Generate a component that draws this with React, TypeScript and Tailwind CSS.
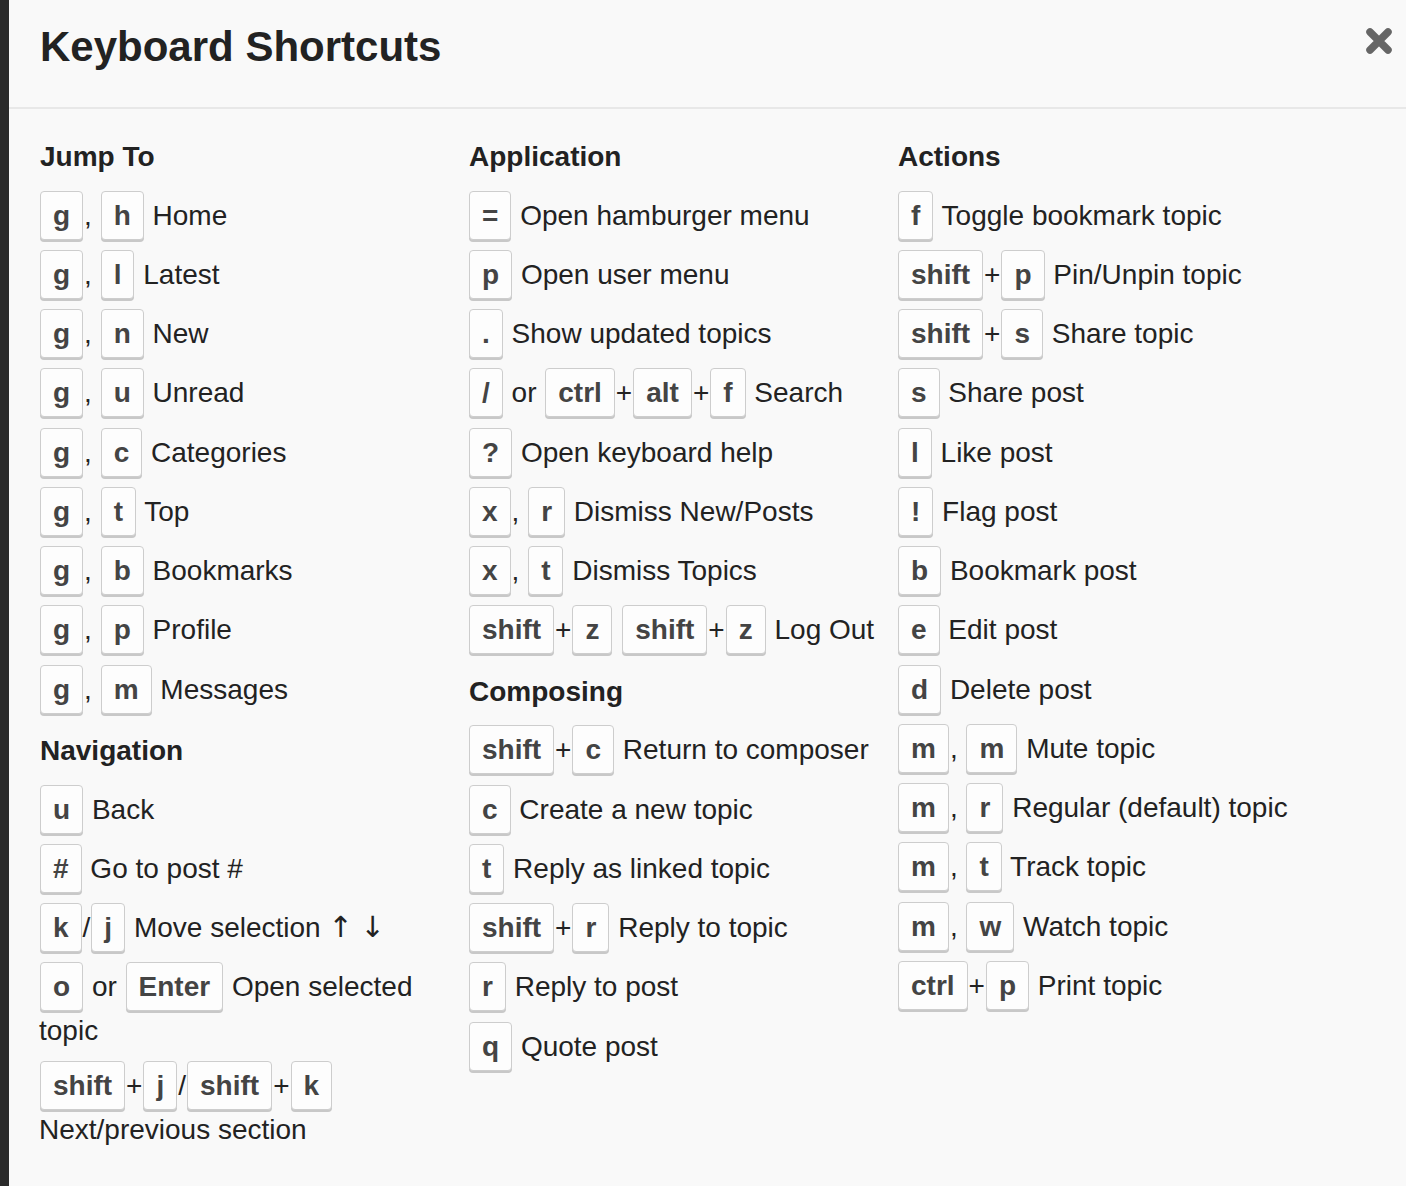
import React from "react";

type Part = string | { k: string } | { a: string };

const K = ({ c }: { c: string }) => (
  <kbd className="mx-px inline-block align-baseline rounded-[4px] border border-[#cdcdcd] bg-[#fdfdfd] px-[12px] py-[6px] font-['Liberation_Sans',Arial,sans-serif] text-[28px] font-bold leading-[35px] text-[#444] shadow-[0_2px_0_#c8c8c8]">
    {c}
  </kbd>
);

const k = (c: string) => ({ k: c });

const Row = ({ parts }: { parts: Part[] }) => (
  <div className="-ml-px mb-[10.25px] leading-[39px]">
    {parts.map((p, i) =>
      typeof p === "string" ? (
        <React.Fragment key={i}>{p}</React.Fragment>
      ) : "k" in p ? (
        <K key={i} c={p.k} />
      ) : (
        <span key={i} className="font-['DejaVu_Sans',sans-serif] text-[29px]">
          {p.a}
        </span>
      )
    )}
  </div>
);

const H = ({ children, first }: { children: React.ReactNode; first?: boolean }) => (
  <h4 className={`${first ? "" : "mt-[19.5px]"} mb-[16.5px] text-[28px] font-bold leading-[35px] text-[#222]`}>
    {children}
  </h4>
);

const jump: Part[][] = [
  [k("g"), ", ", k("h"), " Home"],
  [k("g"), ", ", k("l"), " Latest"],
  [k("g"), ", ", k("n"), " New"],
  [k("g"), ", ", k("u"), " Unread"],
  [k("g"), ", ", k("c"), " Categories"],
  [k("g"), ", ", k("t"), " Top"],
  [k("g"), ", ", k("b"), " Bookmarks"],
  [k("g"), ", ", k("p"), " Profile"],
  [k("g"), ", ", k("m"), " Messages"],
];

const nav: Part[][] = [
  [k("u"), " Back"],
  [k("#"), " Go to post #"],
  [k("k"), "/", k("j"), " Move selection ", { a: "\u2191" }, " ", { a: "\u2193" }],
  [k("o"), " or ", k("Enter"), " Open selected topic"],
  [k("shift"), "+", k("j"), "/", k("shift"), "+", k("k"), " Next/previous section"],
];

const app: Part[][] = [
  [k("="), " Open hamburger menu"],
  [k("p"), " Open user menu"],
  [k("."), " Show updated topics"],
  [k("/"), " or ", k("ctrl"), "+", k("alt"), "+", k("f"), " Search"],
  [k("?"), " Open keyboard help"],
  [k("x"), ", ", k("r"), " Dismiss New/Posts"],
  [k("x"), ", ", k("t"), " Dismiss Topics"],
  [k("shift"), "+", k("z"), " ", k("shift"), "+", k("z"), " Log Out"],
];

const composing: Part[][] = [
  [k("shift"), "+", k("c"), " Return to composer"],
  [k("c"), " Create a new topic"],
  [k("t"), " Reply as linked topic"],
  [k("shift"), "+", k("r"), " Reply to topic"],
  [k("r"), " Reply to post"],
  [k("q"), " Quote post"],
];

const actions: Part[][] = [
  [k("f"), " Toggle bookmark topic"],
  [k("shift"), "+", k("p"), " Pin/Unpin topic"],
  [k("shift"), "+", k("s"), " Share topic"],
  [k("s"), " Share post"],
  [k("l"), " Like post"],
  [k("!"), " Flag post"],
  [k("b"), " Bookmark post"],
  [k("e"), " Edit post"],
  [k("d"), " Delete post"],
  [k("m"), ", ", k("m"), " Mute topic"],
  [k("m"), ", ", k("r"), " Regular (default) topic"],
  [k("m"), ", ", k("t"), " Track topic"],
  [k("m"), ", ", k("w"), " Watch topic"],
  [k("ctrl"), "+", k("p"), " Print topic"],
];

export default function App() {
  return (
    <div className="flex min-h-[1186px] w-full font-['Liberation_Sans',Arial,sans-serif] text-[#222]">
      <div className="w-[9px] shrink-0 bg-[#2a2a2a]" />
      <div className="flex-1 bg-[#f9f9f9]">
        <div className="flex h-[109px] items-start justify-between border-b-2 border-[#e8e8e8] pl-[31px] pr-[13px] pt-[23px]">
          <h3 className="text-[42px] font-bold leading-[48px] text-[#222]">Keyboard Shortcuts</h3>
          <svg width="28" height="28" viewBox="0 0 28 28" className="mt-[4px]">
            <path d="M5 5 L23 23 M23 5 L5 23" stroke="#666" strokeWidth="7.5" strokeLinecap="round" fill="none" />
          </svg>
        </div>
        <div className="grid grid-cols-[420px_420px_420px] gap-x-[9px] pl-[31px] pt-[30px] text-[28px]">
          <div>
            <H first>Jump To</H>
            {jump.map((r, i) => (
              <Row key={i} parts={r} />
            ))}
            <H>Navigation</H>
            {nav.map((r, i) => (
              <Row key={i} parts={r} />
            ))}
          </div>
          <div>
            <H first>Application</H>
            {app.map((r, i) => (
              <Row key={i} parts={r} />
            ))}
            <H>Composing</H>
            {composing.map((r, i) => (
              <Row key={i} parts={r} />
            ))}
          </div>
          <div>
            <H first>Actions</H>
            {actions.map((r, i) => (
              <Row key={i} parts={r} />
            ))}
          </div>
        </div>
      </div>
    </div>
  );
}
